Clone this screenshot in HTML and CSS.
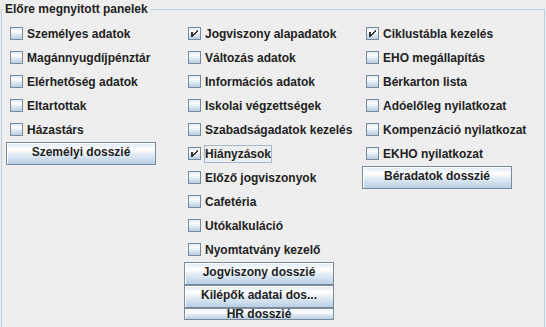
FILE: index.html
```html
<!DOCTYPE html>
<html lang="hu">
<head>
<meta charset="utf-8">
<title>Előre megnyitott panelek</title>
<link rel="stylesheet" href="styles.css">
</head>
<body>
<fieldset class="panel">
  <legend class="panel-title">Előre megnyitott panelek</legend>
  <div class="cols">
    <div class="col">
      <div class="cb"><span class="box"></span><span class="txt">Személyes adatok</span></div>
      <div class="cb"><span class="box"></span><span class="txt">Magánnyugdíjpénztár</span></div>
      <div class="cb"><span class="box"></span><span class="txt">Elérhetőség adatok</span></div>
      <div class="cb"><span class="box"></span><span class="txt">Eltartottak</span></div>
      <div class="cb"><span class="box"></span><span class="txt">Házastárs</span></div>
      <button class="btn" type="button">Személyi dosszié</button>
    </div>
    <div class="col">
      <div class="cb"><span class="box"><svg class="chk" viewBox="0 0 11 11" width="11" height="11"><path d="M2 4h2v5h-2z M8 2h1v2h-1z M7 3h1v2h-1z M6 4h1v2h-1z M5 5h1v2h-1z M4 6h1v2h-1z"/></svg></span><span class="txt">Jogviszony alapadatok</span></div>
      <div class="cb"><span class="box"></span><span class="txt">Változás adatok</span></div>
      <div class="cb"><span class="box"></span><span class="txt">Információs adatok</span></div>
      <div class="cb"><span class="box"></span><span class="txt">Iskolai végzettségek</span></div>
      <div class="cb"><span class="box"></span><span class="txt">Szabadságadatok kezelés</span></div>
      <div class="cb"><span class="box"><svg class="chk" viewBox="0 0 11 11" width="11" height="11"><path d="M2 4h2v5h-2z M8 2h1v2h-1z M7 3h1v2h-1z M6 4h1v2h-1z M5 5h1v2h-1z M4 6h1v2h-1z"/></svg></span><span class="txt focus">Hiányzások</span></div>
      <div class="cb"><span class="box"></span><span class="txt">Előző jogviszonyok</span></div>
      <div class="cb"><span class="box"></span><span class="txt">Cafetéria</span></div>
      <div class="cb"><span class="box"></span><span class="txt">Utókalkuláció</span></div>
      <div class="cb"><span class="box"></span><span class="txt">Nyomtatvány kezelő</span></div>
      <button class="btn" type="button">Jogviszony dosszié</button>
      <button class="btn" type="button">Kilépők adatai dos...</button>
      <button class="btn btn-squeezed" type="button">HR dosszié</button>
    </div>
    <div class="col">
      <div class="cb"><span class="box"><svg class="chk" viewBox="0 0 11 11" width="11" height="11"><path d="M2 4h2v5h-2z M8 2h1v2h-1z M7 3h1v2h-1z M6 4h1v2h-1z M5 5h1v2h-1z M4 6h1v2h-1z"/></svg></span><span class="txt">Ciklustábla kezelés</span></div>
      <div class="cb"><span class="box"></span><span class="txt">EHO megállapítás</span></div>
      <div class="cb"><span class="box"></span><span class="txt">Bérkarton lista</span></div>
      <div class="cb"><span class="box"></span><span class="txt">Adóelőleg nyilatkozat</span></div>
      <div class="cb"><span class="box"></span><span class="txt">Kompenzáció nyilatkozat</span></div>
      <div class="cb"><span class="box"></span><span class="txt">EKHO nyilatkozat</span></div>
      <button class="btn" type="button">Béradatok dosszié</button>
    </div>
  </div>
</fieldset>
</body>
</html>
```
FILE: styles.css
```css
html, body {
  margin: 0;
  padding: 0;
  background: #eeeeee;
  overflow: hidden;
}

body {
  width: 546px;
  height: 327px;
  font-family: "Liberation Sans", Arial, sans-serif;
  font-size: 12px;
  font-weight: bold;
  color: #222222;
}

.panel {
  box-sizing: border-box;
  width: 544px;
  min-height: 327px;
  min-inline-size: 0;
  margin: 1px 0 0 1px;
  padding: 0;
  border: 1px solid #b8cfe5;
}

.panel-title {
  margin-left: 1px;
  padding: 0 2px;
  line-height: 17px;
  color: #222222;
}

.cols {
  display: grid;
  grid-template-columns: repeat(3, 150px);
  column-gap: 28px;
  align-items: start;
  padding: 4px 0 0 4px;
}

.col {
  display: flex;
  flex-direction: column;
}

.cb {
  display: flex;
  align-items: center;
  height: 24px;
  padding-left: 4px;
  white-space: nowrap;
}

.box {
  display: block;
  flex: none;
  box-sizing: border-box;
  width: 13px;
  height: 13px;
  margin: 0 3px 1px 0;
  border: 1px solid #7a8a99;
  background: linear-gradient(to bottom, #dde8f3 0%, #ffffff 30%, #dde8f3 60%, #b8cfe5 100%);
}

.chk {
  display: block;
  fill: #333333;
  shape-rendering: crispEdges;
}

.txt {
  border: 1px solid transparent;
  line-height: 16px;
}

.txt.focus {
  border-color: #a3b8cc;
}

.btn {
  box-sizing: border-box;
  width: 150px;
  height: 23px;
  margin: 0;
  padding: 0 0 2px 0;
  border: 1px solid #7a8a99;
  border-radius: 0;
  background: linear-gradient(to bottom, #dde8f3 0%, #ffffff 30%, #dde8f3 60%, #b8cfe5 100%);
  box-shadow: inset 1px 1px 0 #ffffff;
  font-family: inherit;
  font-size: 12px;
  font-weight: bold;
  line-height: 15px;
  color: #222222;
  text-align: center;
  white-space: nowrap;
}

.btn-squeezed {
  height: 12px;
  padding: 0;
  line-height: 10px;
}
```
